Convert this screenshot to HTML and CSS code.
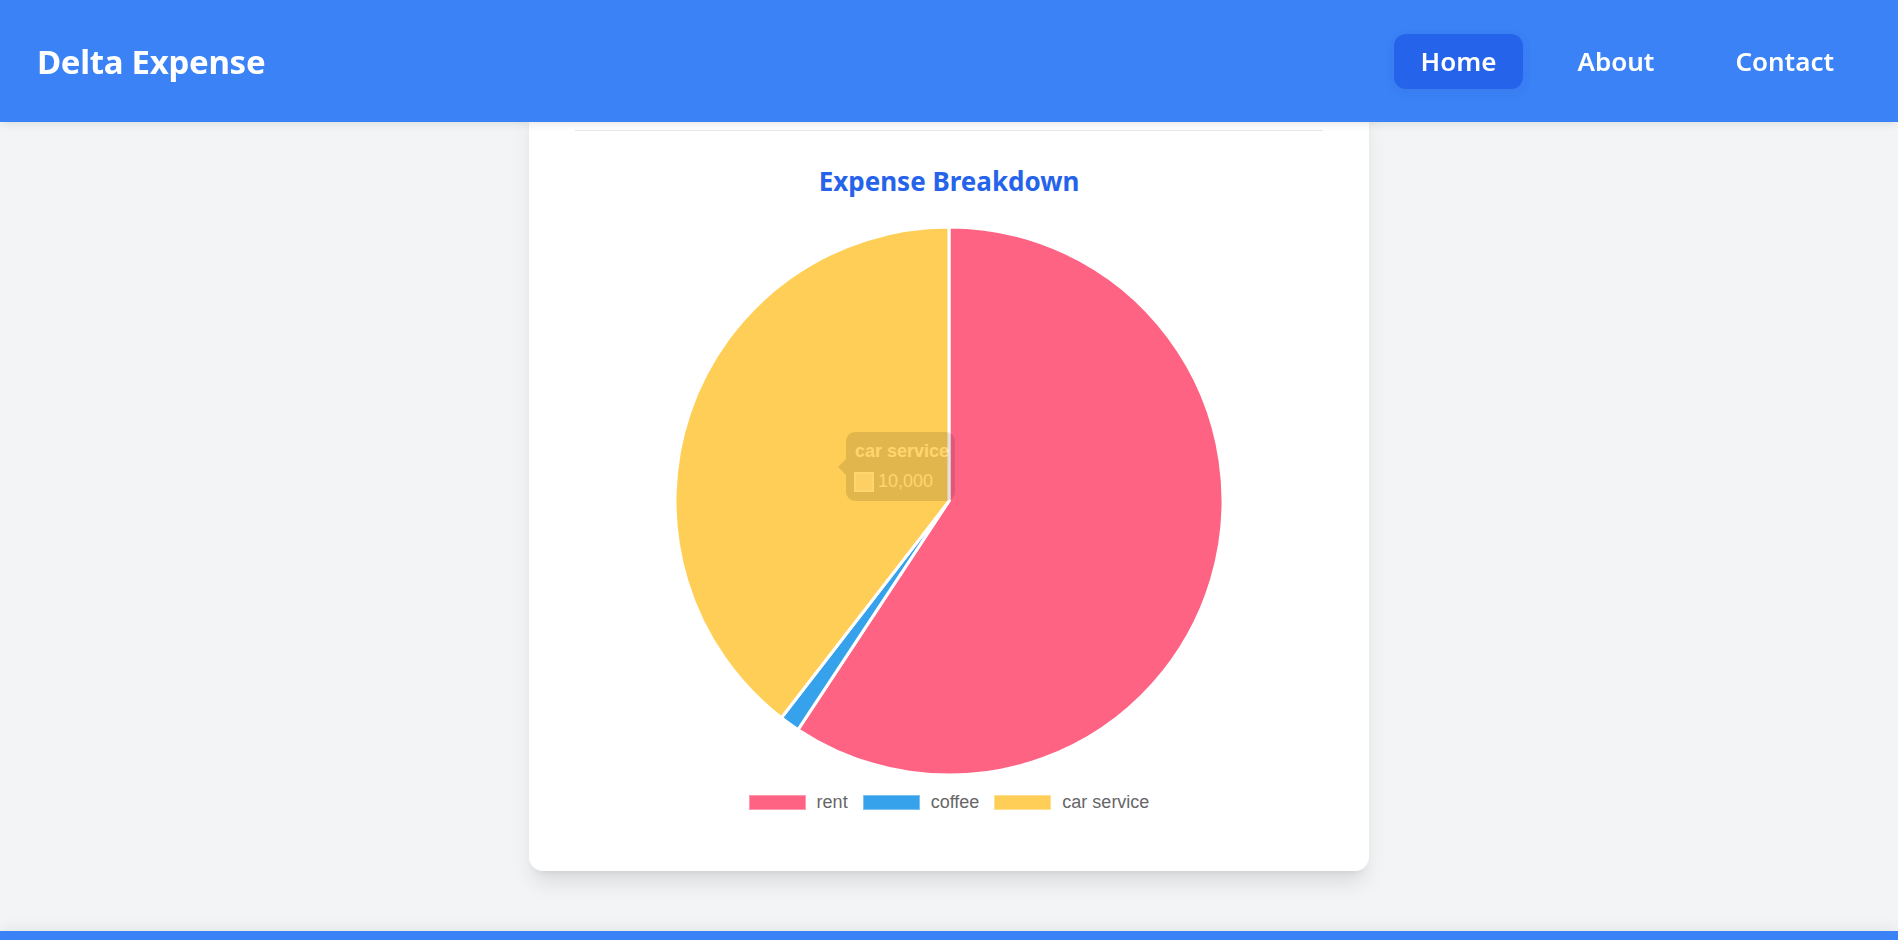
FILE: index.html
```html
<!DOCTYPE html>
<html lang="en">
<head>
<meta charset="utf-8">
<title>Delta Expense</title>
<link rel="stylesheet" href="styles.css">
</head>
<body>
<header class="topbar">
  <div class="brand">Delta Expense</div>
  <nav class="nav">
    <a class="nav-link active" href="#">Home</a>
    <a class="nav-link" href="#">About</a>
    <a class="nav-link" href="#">Contact</a>
  </nav>
</header>
<main class="main">
  <section class="card">
    <div class="card-divider"></div>
    <h2 class="chart-title">Expense Breakdown</h2>
    <div class="chart-wrap">
      <svg class="pie" width="554" height="554" viewBox="-277 -277 554 554">
        <path class="slice rent" d="M0,0 L0,-274 A274,274 0 1,1 -150.97,228.65 Z"/>
        <path class="slice coffee" d="M0,0 L-150.97,228.65 A274,274 0 0,1 -167.6,216.76 Z"/>
        <path class="slice car" d="M0,0 L-167.6,216.76 A274,274 0 0,1 0,-274 Z"/>
      </svg>
      <div class="tooltip">
        <div class="tt-title">car service</div>
        <div class="tt-body"><span class="tt-swatch"></span><span>10,000</span></div>
      </div>
    </div>
    <div class="legend">
      <div class="legend-item"><span class="legend-box box-rent"></span><span>rent</span></div>
      <div class="legend-item"><span class="legend-box box-coffee"></span><span>coffee</span></div>
      <div class="legend-item"><span class="legend-box box-car"></span><span>car service</span></div>
    </div>
  </section>
</main>
<footer class="footer"></footer>
</body>
</html>
```
FILE: styles.css
```css
html, body {
  margin: 0;
  padding: 0;
  overflow: hidden;
}
body {
  background: #F3F4F6;
  font-family: "Noto Sans", "Open Sans", sans-serif;
  color: #1f2937;
}
.topbar {
  position: fixed;
  top: 0;
  left: 0;
  right: 0;
  z-index: 10;
  height: 122px;
  box-sizing: border-box;
  padding: 0 37px;
  background: #3B82F6;
  display: flex;
  align-items: center;
  justify-content: space-between;
  box-shadow: 0 5px 8px -2px rgba(0,0,0,0.08), 0 2px 5px -3px rgba(0,0,0,0.06);
}
.brand {
  color: #fff;
  font-weight: 700;
  font-size: 33px;
  letter-spacing: -0.3px;
}
.nav {
  display: flex;
  gap: 27px;
}
.nav-link {
  display: block;
  color: #fff;
  text-decoration: none;
  font-size: 26px;
  font-weight: 600;
  height: 55px;
  line-height: 55px;
  padding: 0 27px;
  border-radius: 12px;
}
.nav-link.active {
  background: #2563EB;
  box-shadow: 0 3px 10px rgba(30, 64, 175, 0.12);
}
.main {
  padding-top: 100px;
}
.card {
  width: 840px;
  box-sizing: border-box;
  margin: 0 auto;
  background: #fff;
  border-radius: 14px;
  padding: 0 46px 58px;
  box-shadow: 0 15px 22px -4px rgba(0,0,0,0.1), 0 6px 9px -6px rgba(0,0,0,0.1);
}
.card-divider {
  height: 30px;
  border-bottom: 1px solid #E5E7EB;
}
.chart-title {
  margin: 29px 0 0;
  text-align: center;
  color: #2563EB;
  font-size: 26px;
  font-weight: 700;
  line-height: 42px;
}
.chart-wrap {
  position: relative;
  width: 554px;
  height: 554px;
  margin: 22px auto 0;
}
.pie {
  display: block;
}
.slice {
  stroke: #fff;
  stroke-width: 3;
  stroke-linejoin: round;
}
.rent { fill: #FF6384; }
.coffee { fill: #36A2EB; }
.car { fill: #FFCE56; }
.tooltip {
  position: absolute;
  left: 174px;
  top: 208px;
  width: 109px;
  height: 69px;
  box-sizing: border-box;
  padding: 9px;
  border-radius: 9px;
  background: rgba(0,0,0,0.8);
  color: #fff;
  font-family: "Liberation Sans", Arial, sans-serif;
  font-size: 18px;
  line-height: 21px;
  opacity: 0.14;
  white-space: nowrap;
}
.tooltip::before {
  content: "";
  position: absolute;
  left: -8px;
  top: 27px;
  border-right: 8px solid rgba(0,0,0,0.8);
  border-top: 8px solid transparent;
  border-bottom: 8px solid transparent;
}
.tt-title {
  font-weight: 700;
  margin-bottom: 9px;
}
.tt-body {
  display: flex;
  align-items: center;
  gap: 4px;
  margin-left: -1px;
}
.tt-swatch {
  width: 20px;
  height: 20px;
  box-sizing: border-box;
  background: #f1e2bd;
  border: 2px solid #fff;
}
.legend {
  margin-top: 13px;
  display: flex;
  justify-content: center;
  gap: 15px;
  font-family: "Liberation Sans", Arial, sans-serif;
  font-size: 18px;
  line-height: 22px;
  color: #666;
}
.legend-item {
  display: flex;
  align-items: center;
  gap: 11px;
}
.legend-box {
  width: 57px;
  height: 15px;
  box-sizing: border-box;
  border: 1.5px solid rgba(255,255,255,0.35);
}
.box-rent { background: #FF6384; }
.box-coffee { background: #36A2EB; }
.box-car { background: #FFCE56; }
.footer {
  margin-top: 60px;
  height: 80px;
  background: #3B82F6;
  box-shadow: 0 -4px 12px rgba(0,0,0,0.05);
}
```
